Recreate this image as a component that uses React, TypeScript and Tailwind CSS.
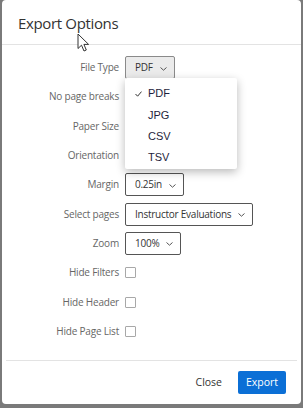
import React from 'react';

const Chevron = () => (
  <svg width="7" height="4" viewBox="0 0 7 4" className="ml-[7px] mt-[2px]">
    <path d="M0.5 0.5 L3.5 3.2 L6.5 0.5" fill="none" stroke="#555" strokeWidth="1" />
  </svg>
);

const Select = ({ value, active }: { value: string; active?: boolean }) => (
  <div
    className={`flex h-[23px] items-center rounded-[2px] border pl-[9px] pr-[7px] text-[10px] tracking-[-0.25px] text-[#333] ${
      active ? 'bg-[#ebebeb] border-[#8a8a8a]' : 'bg-white border-[#555]'
    }`}
  >
    {value}
    <Chevron />
  </div>
);

const Check = () => <div className="h-[11px] w-[11px] rounded-[1px] border border-[#a8a8a8] bg-white" />;

const rows: { label: string; control?: React.ReactNode }[] = [
  { label: 'File Type', control: <Select value="PDF" active /> },
  { label: 'No page breaks' },
  { label: 'Paper Size' },
  { label: 'Orientation' },
  { label: 'Margin', control: <Select value="0.25in" /> },
  { label: 'Select pages', control: <Select value="Instructor Evaluations" /> },
  { label: 'Zoom', control: <Select value="100%" /> },
  { label: 'Hide Filters', control: <Check /> },
  { label: 'Hide Header', control: <Check /> },
  { label: 'Hide Page List', control: <Check /> },
];

const fileTypes = ['PDF', 'JPG', 'CSV', 'TSV'];

export default function App() {
  return (
    <div className="h-[408px] w-[303px] overflow-hidden bg-[#7a7a7a] font-['Open_Sans',sans-serif]">
      <div className="relative ml-[2px] h-[404px] w-[299px] rounded-[4px] bg-white">
        <div className="h-[45px] border-b border-[#e3e3e3] pl-[16px] pt-[12px] text-[15px] tracking-[-0.35px] text-[#333]">
          Export Options
        </div>

        <div className="mx-[4px] flex flex-col border-b border-[#e3e3e3] pb-[14px] pt-[8px]">
          {rows.map((r) => (
            <div key={r.label} className="flex h-[29.3px] items-center gap-[6px]">
              <div className="w-[113px] text-right text-[10px] tracking-[-0.2px] text-[#666]">{r.label}</div>
              {r.control}
            </div>
          ))}
        </div>

        <div className="flex items-center justify-end gap-[16px] pr-[15px] pt-[10px]">
          <button className="text-[10.5px] text-[#333]">Close</button>
          <button className="h-[23px] w-[48px] rounded-[2px] bg-[#0b6fd6] text-[10.5px] text-white">Export</button>
        </div>

        {/* open dropdown */}
        <div className="absolute left-[123px] top-[78px] w-[112px] rounded-[2px] bg-white pb-[1px] pt-[5px] shadow-[0_3px_10px_rgba(0,0,0,0.28)] font-['Liberation_Sans',Arial,sans-serif]">
          {fileTypes.map((t, i) => (
            <div key={t} className="flex h-[21.3px] items-center text-[11px] text-[#1e1e3c]">
              <span className="w-[23px] pl-[10px]">
                {i === 0 && (
                  <svg width="7" height="6" viewBox="0 0 7 6">
                    <path d="M0.5 3 L2.6 5.2 L6.5 0.6" fill="none" stroke="#333" strokeWidth="1" />
                  </svg>
                )}
              </span>
              {t}
            </div>
          ))}
        </div>

        {/* mouse cursor */}
        <svg className="absolute left-[75px] top-[33px]" width="14" height="20" viewBox="0 0 14 20">
          <path d="M1 1 L1 15.5 L4.5 12.2 L7 18 L9.3 17 L6.9 11.4 L11.6 11.4 Z" fill="white" stroke="#333" strokeWidth="1" />
        </svg>
      </div>
    </div>
  );
}
